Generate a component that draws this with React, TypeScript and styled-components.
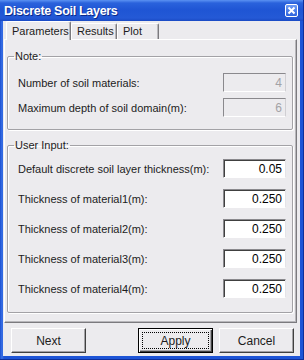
import styled, { createGlobalStyle } from 'styled-components'

const GlobalStyle = createGlobalStyle`
  html, body {
    margin: 0;
    padding: 0;
    background: #ffffff;
  }
  body {
    font-family: 'Liberation Sans', Arial, sans-serif;
    font-size: 11px;
    color: #000000;
  }
`

const Window = styled.div`
  width: 304px;
  height: 360px;
  box-sizing: border-box;
  display: flex;
  flex-direction: column;
  background: linear-gradient(90deg, #1b4fd0 0px, #3a71e6 2px, #1d54d6 4px);
  border-right: 1px solid #0d2f9a;
  border-bottom: 1px solid #0d2f9a;
`

const TitleBar = styled.div`
  height: 21px;
  flex: none;
  display: flex;
  align-items: center;
  justify-content: space-between;
  padding: 0 5px 0 4px;
  background: linear-gradient(180deg, #5b92f2 0px, #2a62dc 3px, #1f55d4 10px, #2459d6 18px, #1a4ac4 21px);
`

const Title = styled.span`
  color: #ffffff;
  font-weight: bold;
  font-size: 12.5px;
  letter-spacing: -0.3px;
  text-shadow: 1px 1px 0 #0b2a8a;
`

const CloseButton = styled.div`
  width: 13px;
  height: 13px;
  box-sizing: border-box;
  border: 1px solid #ffffff;
  border-radius: 2px;
  background: linear-gradient(180deg, #6f9cf4, #2c63de);
  display: flex;
  align-items: center;
  justify-content: center;
`

const Client = styled.div`
  flex: 1;
  margin: 0 3px 3px 3px;
  background: #ecebee;
  display: flex;
  flex-direction: column;
`

const TabStrip = styled.div`
  display: flex;
  align-items: flex-end;
  height: 18px;
  padding-left: 3px;
  position: relative;
  z-index: 1;
`

const Tab = styled.div<{ $active?: boolean; $w: number }>`
  box-sizing: border-box;
  height: ${(p) => (p.$active ? '19px' : '16px')};
  margin-bottom: ${(p) => (p.$active ? '-1px' : '0')};
  padding: ${(p) => (p.$active ? '3px 5px 0 5px' : '1px 5px 0 5px')};
  width: ${(p) => p.$w}px;
  border-left: 1px solid #ffffff;
  border-top: 1px solid #ffffff;
  border-right: 1px solid #7b7a7e;
  border-radius: 2px 2px 0 0;
  background: #ecebee;
  font-size: 11px;
  color: #1c1c1c;
  display: flex;
  align-items: flex-start;
  box-shadow: inset -1px 0 0 #b8b7bb;
`

const Panel = styled.div`
  margin: 0 3px 0 1px;
  height: 284px;
  box-sizing: border-box;
  border-top: 1px solid #ffffff;
  border-left: 1px solid #ffffff;
  border-right: 1px solid #7b7a7e;
  border-bottom: 1px solid #7b7a7e;
  box-shadow: inset -1px -1px 0 #b8b7bb;
  padding: 10px 3px 0 2px;
  display: flex;
  flex-direction: column;
  gap: 9px;
`

const Group = styled.fieldset<{ $h: number }>`
  margin: 0;
  height: ${(p) => p.$h}px;
  box-sizing: border-box;
  border: 1px solid #a3a2a6;
  border-radius: 2px;
  box-shadow: inset 1px 1px 0 #ffffff, 1px 1px 0 #ffffff;
  padding: 0 6px 0 10px;
  display: flex;
  flex-direction: column;
  min-inline-size: 0;
`

const Legend = styled.legend`
  padding: 0 1px;
  margin-left: -4px;
  font-size: 11px;
  color: #1c1c1c;
`

const Rows = styled.div<{ $top: number; $gap: number }>`
  display: flex;
  flex-direction: column;
  gap: ${(p) => p.$gap}px;
  margin-top: ${(p) => p.$top}px;
`

const Row = styled.div`
  display: flex;
  align-items: center;
  justify-content: space-between;
  height: 19px;
`

const Label = styled.span`
  color: #1c1c1c;
  font-size: 11px;
`

const Field = styled.div<{ $disabled?: boolean }>`
  width: 63px;
  height: 19px;
  box-sizing: border-box;
  border-top: 1px solid #8a898d;
  border-left: 1px solid #8a898d;
  border-right: 1px solid ${(p) => (p.$disabled ? '#d0cfd3' : '#e4e3e7')};
  border-bottom: 1px solid #ffffff;
  box-shadow: ${(p) => (p.$disabled ? 'none' : 'inset 1px 1px 0 #404040')};
  background: ${(p) => (p.$disabled ? '#ecebee' : '#ffffff')};
  color: ${(p) => (p.$disabled ? '#a3a2a6' : '#000000')};
  display: flex;
  align-items: center;
  justify-content: flex-end;
  padding-right: 3px;
  font-size: 12px;
`

const ButtonRow = styled.div`
  display: flex;
  padding: 5px 6px 0 8px;
  gap: 6px;
`

const Button = styled.div<{ $default?: boolean }>`
  width: 75px;
  height: 25px;
  box-sizing: border-box;
  background: #ecebee;
  border: 1px solid ${(p) => (p.$default ? '#000000' : '#ffffff')};
  border-right-color: ${(p) => (p.$default ? '#000000' : '#404040')};
  border-bottom-color: ${(p) => (p.$default ? '#000000' : '#404040')};
  box-shadow: ${(p) =>
    p.$default
      ? 'inset 1px 1px 0 #ffffff, inset -1px -1px 0 #404040, inset -2px -2px 0 #a3a2a6'
      : 'inset -1px -1px 0 #a3a2a6'};
  display: flex;
  align-items: center;
  justify-content: center;
  font-size: 12px;
  color: #1c1c1c;
  position: relative;
`

const Spacer = styled.div`
  flex: 1;
`

const FocusRing = styled.div`
  position: absolute;
  inset: 3px;
  border: 1px dotted #000000;
`

const noteRows = [
  { label: 'Number of soil materials:', value: '4' },
  { label: 'Maximum depth of soil domain(m):', value: '6' },
]

const inputRows = [
  { label: 'Default discrete soil layer thickness(m):', value: '0.05' },
  { label: 'Thickness of material1(m):', value: '0.250' },
  { label: 'Thickness of material2(m):', value: '0.250' },
  { label: 'Thickness of material3(m):', value: '0.250' },
  { label: 'Thickness of material4(m):', value: '0.250' },
]

export default function App() {
  return (
    <>
      <GlobalStyle />
      <Window>
        <TitleBar>
          <Title>Discrete Soil Layers</Title>
          <CloseButton>
            <svg width="9" height="9" viewBox="0 0 9 9">
              <path d="M1.5 1.5 L7.5 7.5 M7.5 1.5 L1.5 7.5" stroke="#ffffff" strokeWidth="2" />
            </svg>
          </CloseButton>
        </TitleBar>
        <Client>
          <TabStrip>
            <Tab $active $w={65}>Parameters</Tab>
            <Tab $w={46}>Results</Tab>
            <Tab $w={42}>Plot</Tab>
          </TabStrip>
          <Panel>
            <Group $h={80}>
              <Legend>Note:</Legend>
              <Rows $top={11} $gap={6}>
                {noteRows.map((r) => (
                  <Row key={r.label}>
                    <Label>{r.label}</Label>
                    <Field $disabled>{r.value}</Field>
                  </Row>
                ))}
              </Rows>
            </Group>
            <Group $h={174}>
              <Legend>User Input:</Legend>
              <Rows $top={8} $gap={11}>
                {inputRows.map((r) => (
                  <Row key={r.label}>
                    <Label>{r.label}</Label>
                    <Field>{r.value}</Field>
                  </Row>
                ))}
              </Rows>
            </Group>
          </Panel>
          <ButtonRow>
            <Button>Next</Button>
            <Spacer />
            <Button $default>
              Apply
              <FocusRing />
            </Button>
            <Button>Cancel</Button>
          </ButtonRow>
        </Client>
      </Window>
    </>
  )
}
